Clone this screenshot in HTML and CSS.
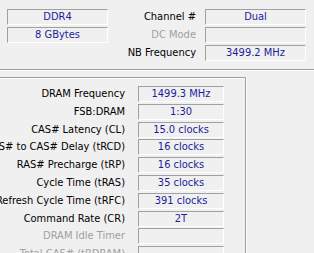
FILE: index.html
```html
<!DOCTYPE html>
<html lang="en">
<head>
  <meta charset="UTF-8">
  <title>Memory</title>
  <link rel="stylesheet" href="styles.css">
</head>
<body>
  <!-- 上半部分：General -->
  <section class="general">
    <div class="row">
      <div class="field left">DDR4</div>
      <div class="label">Channel #</div>
      <div class="field">Dual</div>
    </div>
    <div class="row">
      <div class="field left">8 GBytes</div>
      <div class="label disabled">DC Mode</div>
      <div class="field"></div>
    </div>
    <div class="row">
      <div class="spacer left"></div>
      <div class="label">NB Frequency</div>
      <div class="field">3499.2 MHz</div>
    </div>
  </section>

  <!-- 下半部分：Timings -->
  <section class="timings">
    <div class="label">DRAM Frequency</div><div class="field">1499.3 MHz</div>
    <div class="label">FSB:DRAM</div><div class="field">1:30</div>
    <div class="label">CAS# Latency (CL)</div><div class="field">15.0 clocks</div>
    <div class="label">RAS# to CAS# Delay (tRCD)</div><div class="field">16 clocks</div>
    <div class="label">RAS# Precharge (tRP)</div><div class="field">16 clocks</div>
    <div class="label">Cycle Time (tRAS)</div><div class="field">35 clocks</div>
    <div class="label">Refresh Cycle Time (tRFC)</div><div class="field">391 clocks</div>
    <div class="label">Command Rate (CR)</div><div class="field">2T</div>
    <div class="label disabled">DRAM Idle Timer</div><div class="field"></div>
    <div class="label disabled">Total CAS# (tRDRAM)</div><div class="field"></div>
  </section>
</body>
</html>
```
FILE: styles.css
```css
*,
*::before,
*::after {
  box-sizing: border-box;
}
body {
  margin: 0;
  width: 314px;
  height: 253px;
  overflow: hidden;
  background-color: #f0f0f0;
  font-family: "DejaVu Sans Condensed", "DejaVu Sans", sans-serif;
  font-stretch: condensed;
  font-size: 11px;
  color: #000;
}

/* 只读文本框：上左灰色，下右白色 */
.field {
  height: 16px;
  line-height: 14px;
  border-top: 1px solid #a0a0a0;
  border-left: 1px solid #a0a0a0;
  border-bottom: 1px solid #fff;
  border-right: 1px solid #fff;
  text-align: center;
  color: #1c1c9a;
  white-space: nowrap;
}
.label {
  line-height: 16px;
  text-align: right;
  white-space: nowrap;
}
.disabled {
  color: #a0a0a0;
}

/* General */
.general {
  padding: 9px 8px 8px 7px;
  border-bottom: 1px solid #a0a0a0;
  box-shadow: 0 1px 0 #fff;
  display: flex;
  flex-direction: column;
  gap: 2px;
}
.general .row {
  display: flex;
}
.general .field {
  width: 101px;
}
.general .left {
  width: 101px;
}
.general .label {
  flex: 1;
  padding-right: 9px;
}

/* Timings */
.timings {
  margin: 7px 0 0 -70px;
  width: 316px;
  height: 200px;
  padding-top: 8px;
  border-top: 1px solid #a0a0a0;
  border-right: 1px solid #a0a0a0;
  box-shadow: inset 0 1px 0 #fff, 1px 0 0 #fff;
  display: grid;
  grid-template-columns: 195px 86px;
  grid-auto-rows: 16px;
  column-gap: 13px;
  row-gap: 1.8px;
  align-content: start;
}
```
